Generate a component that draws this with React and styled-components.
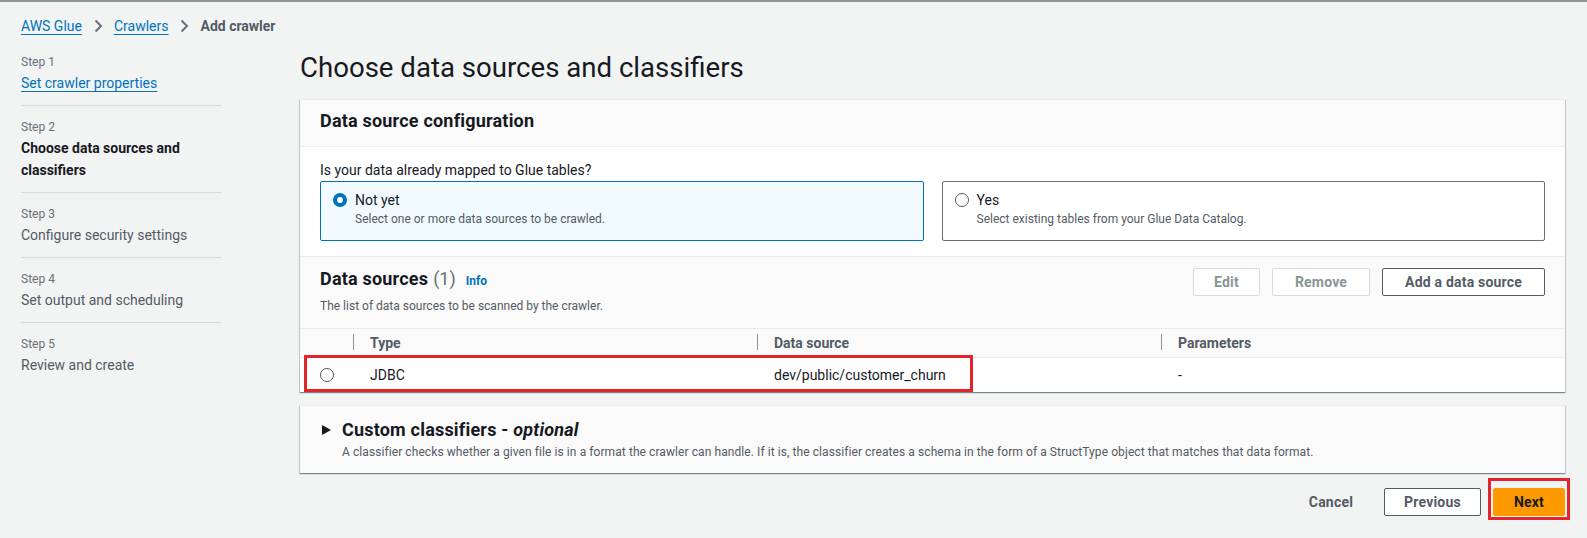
import React from "react";
import styled, { createGlobalStyle } from "styled-components";

const GlobalStyle = createGlobalStyle`
  html, body {
    margin: 0;
    padding: 0;
    background: #f2f3f3;
    font-family: Roboto, "Open Sans", "Liberation Sans", sans-serif;
    color: #16191f;
  }
  * { box-sizing: border-box; }
`;

const TopRule = styled.div`
  height: 2px;
  background: #8d9599;
`;

const Page = styled.div`
  padding: 14px 22px 20px 21px;
`;

const Breadcrumbs = styled.nav`
  display: flex;
  align-items: center;
  font-size: 14px;
  line-height: 20px;
`;

const Link = styled.a`
  color: #0073bb;
  text-decoration: underline;
  text-underline-offset: 3px;
  cursor: pointer;
`;

const Current = styled.span`
  color: #545b64;
  font-weight: 700;
`;

const Chevron = styled.svg`
  width: 16px;
  height: 16px;
  margin: 0 8px;
  flex: none;
`;

const Layout = styled.div`
  display: grid;
  grid-template-columns: 200px 1fr;
  column-gap: 79px;
  margin-top: 14px;
`;

const Steps = styled.ol`
  list-style: none;
  margin: 0;
  padding: 4px 0 0;
`;

const Step = styled.li`
  padding: 13px 0 11px;
  border-top: 1px solid #d5dbdb;
  &:first-child {
    padding-top: 0;
    border-top: none;
  }
`;

const StepLabel = styled.div`
  font-size: 12px;
  line-height: 16px;
  color: #687078;
`;

const StepTitle = styled.div`
  margin-top: 2px;
  font-size: 14px;
  line-height: 22px;
  color: ${(p) => (p.$active ? "#16191f" : "#545b64")};
  font-weight: ${(p) => (p.$active ? 700 : 400)};
`;

const Main = styled.main`
  min-width: 0;
`;

const PageTitle = styled.h1`
  margin: 0 0 13px;
  font-size: 27.6px;
  line-height: 36px;
  font-weight: 400;
  color: #16191f;
`;

const Container = styled.section`
  background: #fff;
  border-top: 1px solid #eaeded;
  box-shadow: 0 1px 1px 0 rgba(0, 28, 36, 0.3),
    1px 1px 1px 0 rgba(0, 28, 36, 0.15),
    -1px 1px 1px 0 rgba(0, 28, 36, 0.15);
`;

const ContainerHeader = styled.div`
  background: #fafafa;
  border-bottom: 1px solid #eaeded;
  padding: 10px 20px 14px;
`;

const H2 = styled.h2`
  margin: 0;
  font-size: 18px;
  line-height: 22px;
  font-weight: 700;
  letter-spacing: 0.2px;
  color: #16191f;
`;

const Section = styled.div`
  padding: 12px 20px 15px;
`;

const Question = styled.div`
  font-size: 14px;
  line-height: 22px;
  color: #16191f;
`;

const Tiles = styled.div`
  display: grid;
  grid-template-columns: 1fr 1fr;
  column-gap: 18px;
`;

const Tile = styled.label`
  display: flex;
  gap: 8px;
  padding: 7px 12px 13px;
  border: 1px solid ${(p) => (p.$selected ? "#0073bb" : "#687078")};
  background: ${(p) => (p.$selected ? "#f1faff" : "#fff")};
  border-radius: 2px;
`;

const Radio = styled.span`
  flex: none;
  width: 14px;
  height: 14px;
  margin-top: ${(p) => p.$offset || 0}px;
  border-radius: 50%;
  border: ${(p) => (p.$checked ? "4px solid #0073bb" : "1.5px solid #545b64")};
  background: #fff;
`;

const TileText = styled.div`
  display: flex;
  flex-direction: column;
`;

const TileLabel = styled.span`
  font-size: 14px;
  line-height: 22px;
  color: #16191f;
`;

const TileDesc = styled.span`
  font-size: 12px;
  line-height: 16px;
  color: #545b64;
`;

const TableHeaderArea = styled.div`
  display: flex;
  justify-content: space-between;
  align-items: flex-start;
  background: #fafafa;
  border-top: 1px solid #eaeded;
  padding: 11px 20px 14px;
`;

const TitleLine = styled.div`
  display: flex;
  align-items: baseline;
  font-size: 18px;
  line-height: 22px;
`;

const TitleText = styled.span`
  font-weight: 700;
  letter-spacing: 0.2px;
  color: #16191f;
`;

const Counter = styled.span`
  margin-left: 5px;
  color: #687078;
`;

const InfoLink = styled.a`
  margin-left: 10px;
  font-size: 12px;
  font-weight: 700;
  color: #0073bb;
`;

const AreaDesc = styled.div`
  margin-top: 6px;
  font-size: 12px;
  line-height: 16px;
  color: #545b64;
`;

const Actions = styled.div`
  display: flex;
  gap: 12px;
`;

const Button = styled.button`
  height: 28px;
  padding: 0 ${(p) => p.$pad ?? 20}px;
  font-family: inherit;
  font-size: 14px;
  line-height: 20px;
  font-weight: 700;
  letter-spacing: 0.2px;
  border-radius: 2px;
  cursor: pointer;
  border: 1px solid
    ${(p) =>
      p.$variant === "primary"
        ? "#ff9900"
        : p.$variant === "link"
        ? "transparent"
        : p.disabled
        ? "#d5dbdb"
        : "#545b64"};
  background: ${(p) => (p.$variant === "primary" ? "#ff9900" : p.$variant === "link" ? "transparent" : "#fff")};
  color: ${(p) => (p.$variant === "primary" ? "#16191f" : p.disabled ? "#879596" : "#545b64")};
`;

const TableGrid = styled.div`
  display: grid;
  grid-template-columns: 53px repeat(3, 1fr);
`;

const HeaderRow = styled(TableGrid)`
  height: 30px;
  background: #fafafa;
  border-top: 1px solid #eaeded;
  border-bottom: 1px solid #eaeded;
`;

const HeaderCell = styled.div`
  position: relative;
  display: flex;
  align-items: center;
  padding-left: 17px;
  font-size: 14px;
  font-weight: 700;
  color: #545b64;
  &::before {
    content: "";
    position: absolute;
    left: 0;
    top: 5px;
    height: 16px;
    width: 1px;
    background: ${(p) => (p.$divider ? "#879596" : "transparent")};
  }
`;

const DataRow = styled(TableGrid)`
  position: relative;
  height: 34px;
  background: #fff;
`;

const DataCell = styled.div`
  display: flex;
  align-items: center;
  padding-left: 17px;
  font-size: 14px;
  color: #16191f;
`;

const SelectCell = styled.div`
  display: flex;
  align-items: center;
  justify-content: center;
  padding-left: 1px;
`;

const Highlight = styled.div`
  position: absolute;
  border: 3px solid #e3242b;
  pointer-events: none;
`;

const RowHighlight = styled(Highlight)`
  left: 4px;
  top: -3px;
  width: 669px;
  height: 37px;
`;

const NextHighlight = styled(Highlight)`
  left: -5px;
  right: -5px;
  top: -10px;
  bottom: -4px;
`;

const Expandable = styled.section`
  margin-top: 13px;
  background: #fafafa;
  border-top: 1px solid #eaeded;
  box-shadow: 0 1px 1px 0 rgba(0, 28, 36, 0.3),
    1px 1px 1px 0 rgba(0, 28, 36, 0.15),
    -1px 1px 1px 0 rgba(0, 28, 36, 0.15);
  padding: 13px 20px 13px 22px;
`;

const ExpandHeader = styled.div`
  display: flex;
  align-items: center;
  gap: 11px;
`;

const Caret = styled.svg`
  width: 9px;
  height: 10px;
  flex: none;
`;

const ExpandBody = styled.div`
  margin-top: 3px;
  padding-left: 20px;
  font-size: 12px;
  line-height: 16px;
  letter-spacing: 0.08px;
  color: #545b64;
`;

const Optional = styled.i`
  font-weight: 700;
`;

const Footer = styled.div`
  display: flex;
  justify-content: flex-end;
  align-items: center;
  gap: 10px;
  margin-top: 15px;
`;

const NextWrap = styled.div`
  position: relative;
  margin-left: 2px;
`;

const ChevronIcon = () => (
  <Chevron viewBox="0 0 16 16" fill="none">
    <path d="M5.5 2.5 11 8l-5.5 5.5" stroke="#687078" strokeWidth="2" />
  </Chevron>
);

const steps = [
  { label: "Step 1", title: "Set crawler properties", link: true },
  { label: "Step 2", title: "Choose data sources and classifiers", active: true },
  { label: "Step 3", title: "Configure security settings" },
  { label: "Step 4", title: "Set output and scheduling" },
  { label: "Step 5", title: "Review and create" },
];

export default function App() {
  return (
    <>
      <GlobalStyle />
      <TopRule />
      <Page>
        <Breadcrumbs>
          <Link>AWS Glue</Link>
          <ChevronIcon />
          <Link>Crawlers</Link>
          <ChevronIcon />
          <Current>Add crawler</Current>
        </Breadcrumbs>
        <Layout>
          <Steps>
            {steps.map((s) => (
              <Step key={s.label}>
                <StepLabel>{s.label}</StepLabel>
                <StepTitle $active={s.active}>
                  {s.link ? <Link>{s.title}</Link> : s.title}
                </StepTitle>
              </Step>
            ))}
          </Steps>
          <Main>
            <PageTitle>Choose data sources and classifiers</PageTitle>
            <Container>
              <ContainerHeader>
                <H2>Data source configuration</H2>
              </ContainerHeader>
              <Section>
                <Question>Is your data already mapped to Glue tables?</Question>
                <Tiles>
                  <Tile $selected>
                    <Radio $checked $offset={4} />
                    <TileText>
                      <TileLabel>Not yet</TileLabel>
                      <TileDesc>Select one or more data sources to be crawled.</TileDesc>
                    </TileText>
                  </Tile>
                  <Tile>
                    <Radio $offset={4} />
                    <TileText>
                      <TileLabel>Yes</TileLabel>
                      <TileDesc>Select existing tables from your Glue Data Catalog.</TileDesc>
                    </TileText>
                  </Tile>
                </Tiles>
              </Section>
              <TableHeaderArea>
                <div>
                  <TitleLine>
                    <TitleText>Data sources</TitleText>
                    <Counter>(1)</Counter>
                    <InfoLink>Info</InfoLink>
                  </TitleLine>
                  <AreaDesc>The list of data sources to be scanned by the crawler.</AreaDesc>
                </div>
                <Actions>
                  <Button disabled $pad={20}>Edit</Button>
                  <Button disabled $pad={22}>Remove</Button>
                  <Button $pad={22}>Add a data source</Button>
                </Actions>
              </TableHeaderArea>
              <HeaderRow>
                <HeaderCell />
                <HeaderCell $divider>Type</HeaderCell>
                <HeaderCell $divider>Data source</HeaderCell>
                <HeaderCell $divider>Parameters</HeaderCell>
              </HeaderRow>
              <DataRow>
                <SelectCell>
                  <Radio />
                </SelectCell>
                <DataCell>JDBC</DataCell>
                <DataCell>dev/public/customer_churn</DataCell>
                <DataCell>-</DataCell>
                <RowHighlight />
              </DataRow>
            </Container>
            <Expandable>
              <ExpandHeader>
                <Caret viewBox="0 0 9 10">
                  <path d="M0 0 9 5 0 10z" fill="#16191f" />
                </Caret>
                <H2>
                  Custom classifiers - <Optional>optional</Optional>
                </H2>
              </ExpandHeader>
              <ExpandBody>
                A classifier checks whether a given file is in a format the crawler can handle. If it is, the classifier creates a schema in the form of a StructType object that matches that data format.
              </ExpandBody>
            </Expandable>
            <Footer>
              <Button $variant="link">Cancel</Button>
              <Button $pad={19}>Previous</Button>
              <NextWrap>
                <Button $variant="primary" $pad={20}>Next</Button>
                <NextHighlight />
              </NextWrap>
            </Footer>
          </Main>
        </Layout>
      </Page>
    </>
  );
}
